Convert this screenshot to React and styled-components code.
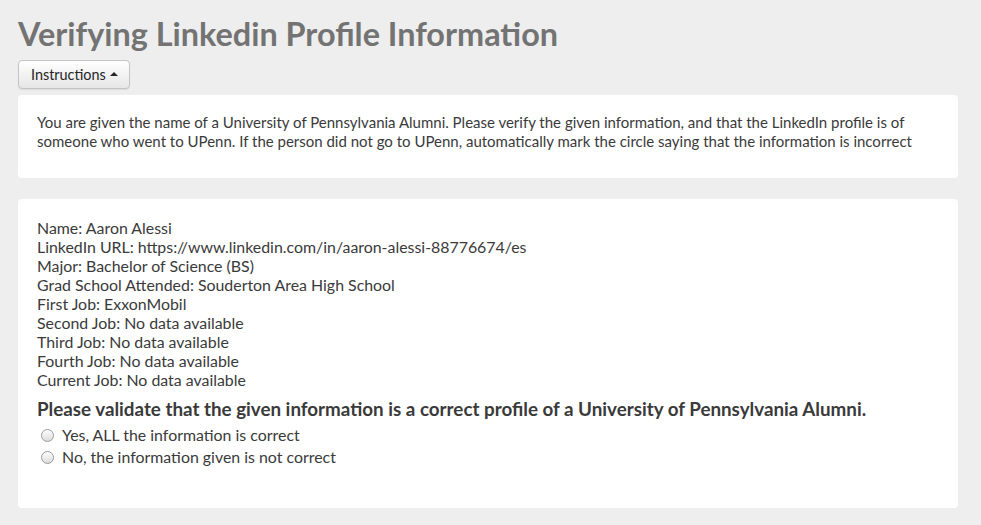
import React from "react"
import styled, { createGlobalStyle } from "styled-components"

const GlobalStyle = createGlobalStyle`
  html, body {
    margin: 0;
    padding: 0;
    background-color: #eeeeee;
    font-family: Lato, "Open Sans", sans-serif;
    color: #333;
  }
`

const Page = styled.div`
  padding: 14px 23px 17px 18px;
`

const Title = styled.h1`
  margin: 0;
  font-size: 32.4px;
  font-weight: 700;
  line-height: 40px;
  color: #737373;
`

const DropButton = styled.button`
  margin-top: 6px;
  height: 29px;
  width: 112px;
  padding: 0 12px;
  font-family: Lato, sans-serif;
  font-size: 14.4px;
  color: #262626;
  background: linear-gradient(#ffffff, #e6e6e6);
  border: 1px solid #c4c4c4;
  border-radius: 4px;
  box-shadow: 0 1px 1px rgba(0, 0, 0, 0.08);
  display: flex;
  align-items: center;
  gap: 4px;
  cursor: pointer;
`

const Caret = styled.span`
  width: 0;
  height: 0;
  margin-top: -2px;
  border-left: 4px solid transparent;
  border-right: 4px solid transparent;
  border-bottom: 4px solid #262626;
`

const Panel = styled.div`
  background-color: #fff;
  border-radius: 4px;
  margin-top: ${({ gap }) => gap}px;
  padding: ${({ pad }) => pad};
  font-size: ${({ size }) => size}px;
  line-height: 19px;
  color: #3a3a3a;
`

const Intro = styled.p`
  margin: 0;
`

const InfoList = styled.div`
  display: flex;
  flex-direction: column;
`

const Question = styled.h3`
  margin: 8px 0 2px;
  font-size: 18.8px;
  font-weight: 700;
  line-height: 24px;
  color: #3a3a3a;
`

const Option = styled.label`
  display: flex;
  align-items: center;
  gap: 8px;
  height: 22px;
`

const Radio = styled.input`
  appearance: none;
  margin: 2px 0 0 4px;
  width: 13px;
  height: 13px;
  border-radius: 50%;
  border: 1px solid #9a9a9a;
  background: linear-gradient(#fdfdfd, #dcdcdc);
  box-shadow: inset 0 1px 1px rgba(255, 255, 255, 0.8);

  &:checked {
    background: radial-gradient(circle, #3a76d6 0 3px, #fdfdfd 3.5px);
    border-color: #3a76d6;
  }
`

const fields = [
  ["Name", "Aaron Alessi"],
  ["LinkedIn URL", "https://www.linkedin.com/in/aaron-alessi-88776674/es"],
  ["Major", "Bachelor of Science (BS)"],
  ["Grad School Attended", "Souderton Area High School"],
  ["First Job", "ExxonMobil"],
  ["Second Job", "No data available"],
  ["Third Job", "No data available"],
  ["Fourth Job", "No data available"],
  ["Current Job", "No data available"],
]

export default function App() {
  const [choice, setChoice] = React.useState(null)

  return (
    <Page>
      <GlobalStyle />
      <Title>Verifying Linkedin Profile Information</Title>
      <DropButton>
        Instructions <Caret />
      </DropButton>
      <Panel gap={6} pad="18px 19px 27px" size={15}>
        <Intro>
          You are given the name of a University of Pennsylvania Alumni. Please verify the given
          information, and that the LinkedIn profile is of someone who went to UPenn. If the person
          did not go to UPenn, automatically mark the circle saying that the information is incorrect
        </Intro>
      </Panel>
      <Panel gap={21} pad="19px 19px 41px" size={15.9}>
        <InfoList>
          {fields.map(([label, value]) => (
            <div key={label}>
              {label}: {value}
            </div>
          ))}
        </InfoList>
        <Question>
          Please validate that the given information is a correct profile of a University of
          Pennsylvania Alumni.
        </Question>
        <Option>
          <Radio
            type="radio"
            name="valid"
            checked={choice === "yes"}
            onChange={() => setChoice("yes")}
          />
          Yes, ALL the information is correct
        </Option>
        <Option>
          <Radio
            type="radio"
            name="valid"
            checked={choice === "no"}
            onChange={() => setChoice("no")}
          />
          No, the information given is not correct
        </Option>
      </Panel>
    </Page>
  )
}
